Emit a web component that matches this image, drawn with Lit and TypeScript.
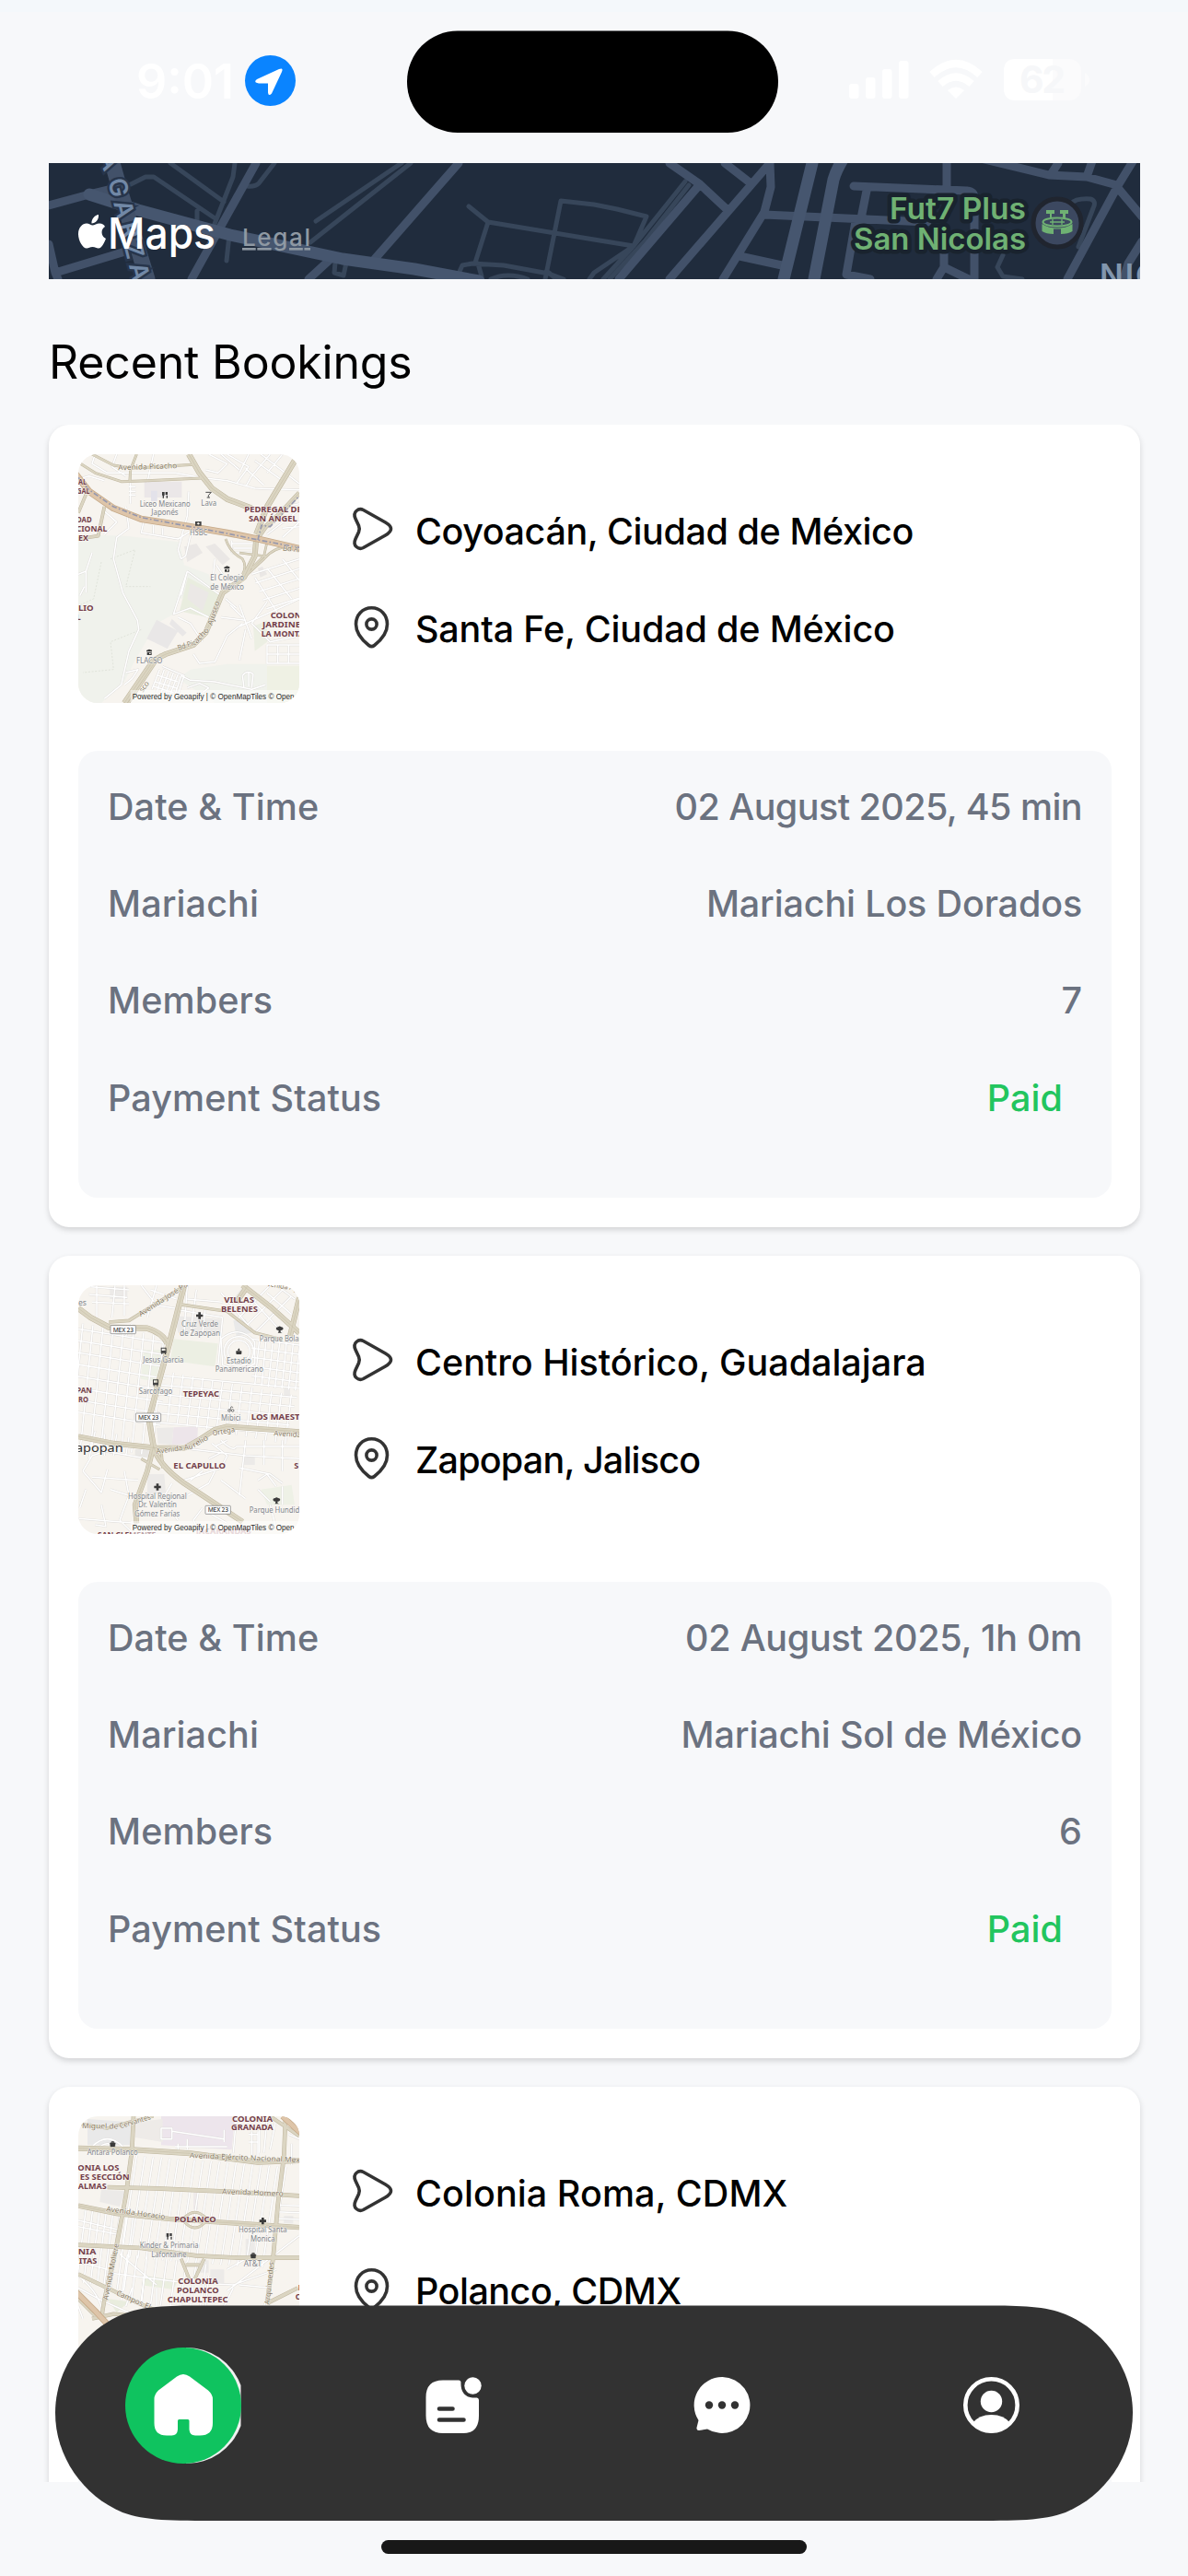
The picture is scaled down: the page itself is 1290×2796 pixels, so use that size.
import { LitElement, html, svg, css } from "lit";
import { customElement, property } from "lit/decorators.js";

/** A piece of card text with its tracking in pixels. */
type Tracked = [text: string, tracking: number];

interface Booking {
  from: Tracked;
  to: Tracked;
  rows: [string, Tracked][];
  map: number;
}

type Label = [kind: string, x: number, y: number, text: string, width: number, rotate?: number];

interface Tile {
  viewBox: string;
  areas: [string, string][];
  minor: string[];
  roads: [string, number][];
  trunks: [string, number][];
  rail: string;
  labels: Label[];
  marks: [string, number, number][];
}

/** Evenly spaced straight streets between two end lines. */
const grid = (n: number, a: number[], b: number[], step: number[]): string =>
  Array.from({ length: n }, (_, i) =>
    `M${a[0] + step[0] * i} ${a[1] + step[1] * i}L${b[0] + step[0] * i} ${b[1] + step[1] * i}`
  ).join("");

const TILES: Tile[] = [
  {
    viewBox: "75 129 720 810",
    areas: [
      ["#f0f2ec", "M75 395L135 392L230 395L405 415L420 490L500 520L525 590L400 600L385 650L330 680L260 800L225 870L150 939H75Z"],
      ["#f0f2ec", "M440 830L560 812H690V939H520L400 860Z"],
      ["#eff1e4", "M690 818H795V939H690Z"],
      ["#e9eddf", "M432 530L540 588L510 664L405 640Z"],
      ["#ecefe3", "M645 690L690 670L690 740L650 770Z"],
      ["#e9e7e7", "M330 668L400 705L365 762L298 730Z"],
      ["#e9e7e7", "M380 665L428 710L415 722L372 682Z"],
      ["#ebe8e6", "M440 550L500 580L480 640L430 600Z"],
      ["#ebe7e8", "M290 218H412V270H290Z"],
      ["#e3e2ea", "M312 248H332V282H312Z"],
      ["#eae7e5", "M490 430L520 420L570 470L545 490Z"],
      ["#eae7e5", "M420 430L460 420L480 450L430 480Z"],
      ["#eae7e5", "M660 500L675 495L690 520L668 530Z"],
    ],
    minor: [
      "M130 129L120 160L170 190L390 190L470 205L560 215L650 240L795 245",
      "M200 129L185 170L230 200M320 129L300 220M245 190V290M240 235H262M240 250H262M240 262H262M75 210L110 200L160 215",
      "M500 129L560 160L530 190L490 180M560 129L630 170L590 225M630 129L600 190M650 150L740 215M700 129L640 200L620 235M740 129L690 190M540 129L600 180M670 129L795 225M620 175L680 230",
      "M230 300L240 370L200 400L190 470L220 580L268 670L272 700L240 770L215 880L160 925",
      "M155 310L200 350L160 390M290 340L280 385L400 405L440 380M350 370V392M320 360V388M440 395L425 460L410 470L400 440L430 330L435 250",
      "M120 450L100 510L75 520M100 510V580M95 560L80 590",
      "M430 510L385 650L440 630L500 660M430 510L540 590M430 510L410 590M520 470L515 520M525 490L545 520",
      "M350 820L420 850L400 912M340 830L315 895M355 830L330 905M370 835L345 905M385 840L360 910M400 845L375 910M410 850L390 912M335 850L400 870M325 870L395 890M320 885L385 905",
      "M410 850L440 865L520 870L640 895L685 880M610 850L615 890M630 840V885M645 845L640 890M610 850Q625 830 645 845",
      "M430 890L470 875L500 890L480 905M230 840L270 830L250 860L225 880M540 660L620 670M555 600L590 630M450 780L470 810L520 805L560 720L610 680M400 660L440 680L480 740",
      grid(5, [640, 520], [795, 470], [12, 28]),
      "M650 530L740 670M690 500L770 600M740 470L795 540M600 690L795 600M600 620L640 730M620 700L600 800M690 610L640 680L700 740L795 720M570 620L610 660",
      "M690 750H795M690 780H795M690 810H795M690 750V812M725 750V812M760 750V812M575 420H650M580 435H640M575 450H640M575 410V450",
      "M700 310L795 290M720 330L795 350M740 370L795 365M690 390L795 310M740 400L795 350",
    ],
    roads: [
      ["M75 155L130 190L215 218L300 215L475 207", 7],
      ["M120 129L190 165L250 175L450 163", 7],
      ["M265 129L245 180L243 215", 7],
      ["M435 129L470 190L510 240L560 275L640 305", 17],
      ["M780 150L735 225L690 300L655 390", 17],
      ["M795 255L735 320L685 365L660 400", 14],
      ["M160 300L140 395L75 405M100 260L75 320", 9],
      ["M655 400L650 460L615 530L545 580L520 640L490 710L450 750L360 780L320 800L225 939", 16],
      ["M555 405Q570 450 610 470Q625 495 610 520M690 415L680 460L640 500M790 435Q720 420 680 470L615 530M600 450L690 462", 6],
      ["M345 780L240 939", 6],
    ],
    trunks: [["M60 185L110 250L190 305L280 340L440 365L560 385L660 405L810 440", 17]],
    rail: "M75 205L110 245L190 300L280 335L440 365L560 387L660 408L795 433M660 408L672 360L700 365L795 265",
    labels: [
      ["street", 205, 181, "Avenida Picacho", 192, -2],
      ["poi", 275, 299, "Liceo Mexicano", 165],
      ["poi", 313, 328, "Japonés", 88],
      ["poi", 475, 298, "Lava", 50],
      ["poi", 438, 393, "HSBC", 58],
      ["poi", 505, 541, "El Colegio", 110],
      ["poi", 505, 569, "de México", 110],
      ["poi", 264, 810, "FLACSO", 85],
      ["area", 75, 228, "AL", 27],
      ["area", 70, 257, "GAL", 43],
      ["area", 69, 350, "DAD", 50],
      ["area", 68, 380, "CIONAL", 101],
      ["area", 75, 410, "EX", 33],
      ["area", 75, 638, "LIO", 50],
      ["area", 68, 668, "L", 15],
      ["area", 616, 317, "PEDREGAL DE", 187],
      ["area", 630, 347, "SAN ÁNGEL", 158],
      ["area", 701, 662, "COLONIA", 132],
      ["area", 675, 693, "JARDINES", 140],
      ["area", 671, 723, "LA MONTAÑA", 180],
      ["street", 740, 443, "Bd Adolfo", 110, 5],
      ["street", 401, 768, "Bd Pic", 62, -18],
      ["street", 461, 746, "acho", 60, -46],
      ["street", 511, 688, "Ajusco", 82, -72],
      ["street", 285, 906, "sco", 38, -55],
    ],
    marks: [["fork", 357, 262], ["glass", 499, 261], ["bank", 466, 355], ["shop", 559, 503], ["shop", 306, 774]],
  },
  {
    viewBox: "75 135 720 810",
    areas: [
      ["#ecefe3", "M385 310L530 325L520 400L375 380Z"],
      ["#eef1e6", "M288 345L345 345L330 450L278 440Z"],
      ["#eef1e6", "M670 800L770 785L780 850L690 850Z"],
      ["#ede5ea", "M385 598L465 595L462 650L380 655Z"],
      ["#eceae8", "M330 600L385 598L380 655L335 650Z"],
      ["#eceae8", "M178 140H235V180H178Z"],
      ["#eceae8", "M390 235L540 245V290H400Z"],
      ["#e9e9e9", "M580 250L620 245L640 290L590 300Z"],
      ["#eceae8", "M300 750L355 750L360 810L300 820Z"],
      ["#eceae8", "M745 470H765V500H745Z"],
      ["#eceae8", "M615 690H650V720H615Z"],
      ["#e9e7e4", "M260 670H305V695H260Z"],
    ],
    minor: [
      grid(8, [60, 275], [370, 325], [-4, 38]),
      grid(9, [90, 260], [50, 650], [33, 5]),
      grid(6, [350, 430], [795, 470], [-8, 30]),
      grid(13, [385, 420], [365, 580], [32, 6]),
      grid(5, [640, 310], [795, 330], [0, 30]),
      grid(7, [665, 310], [650, 460], [22, 3]),
      "M135 135V240M115 140L240 150M110 165L235 175M120 190L240 195M195 135L185 240M225 135V235M280 135L330 200L390 210M310 150L395 180M330 135L300 240M250 260L230 300",
      "M430 135L420 290M460 150L440 290M430 180L545 190M400 215L545 240M490 205L480 290M545 240L530 400M540 160L640 280M590 250L700 135M620 270L740 150M650 290L770 170M640 180L740 290M690 160L770 230M720 135L780 180M620 135L570 200",
      "M370 660L620 690L795 700M620 640L600 820M680 640V720M740 640V740M590 660H795M480 740L440 770M420 770L540 730L560 690L510 650M540 640Q580 680 590 660M520 660L560 640M500 700L540 680",
      "M90 740L120 690L180 670M100 800L80 860M170 735L150 810L90 740M225 740L240 820L180 800M240 820L210 900L250 940M150 850L165 920L130 915M75 895L260 910M120 760L270 770M380 780L350 830L400 900M480 860L450 900L470 940M490 870L560 910M600 730L700 750L740 780M660 770L690 750L720 790M660 800L700 840M740 790V850M540 770L620 830M430 820L500 780L520 740M700 850L720 930",
      "M130 610L110 700M200 620L190 690M75 660L300 700M160 620V690M240 630L230 690",
      "M550 350a48 48 0 1 1 96 0a48 48 0 1 1 -96 0M562 350a36 36 0 1 1 72 0a36 36 0 1 1 -72 0M540 310Q600 260 650 320L650 390Q600 420 545 395Z",
    ],
    roads: [
      ["M75 210L115 240L175 272L300 275Q350 290 365 325", 17],
      ["M420 135L370 330L340 440L305 570L320 660", 17],
      ["M425 135L240 250L175 255", 9],
      ["M410 198L560 220L650 290L740 312", 8],
      ["M610 135L700 205L795 290M795 175L765 300M625 140L590 190", 16],
      ["M75 628L190 650L330 665L420 665Q470 640 520 605L560 595L795 612", 15],
      ["M320 660L300 740L260 850L265 910", 15],
      ["M320 660Q335 720 420 780L610 905", 16],
      ["M345 665L350 730M280 700L340 735", 7],
    ],
    trunks: [],
    rail: "",
    labels: [
      ["street", 278, 238, "Avenida José Pa", 185, -33],
      ["poi", 75, 202, "es", 27],
      ["area", 550, 191, "VILLAS", 98],
      ["area", 540, 221, "BELENES", 120],
      ["street", 690, 138, "venida Ag", 100, 9],
      ["poi", 411, 271, "Cruz Verde", 120],
      ["poi", 406, 300, "de Zapopan", 131],
      ["poi", 665, 319, "Parque Bolar", 138],
      ["poi", 286, 388, "Jesus Garcia", 132],
      ["poi", 558, 389, "Estadio", 80],
      ["poi", 521, 418, "Panamericano", 157],
      ["poi", 272, 490, "Sarcofago", 110],
      ["area", 416, 498, "TEPEYAC", 118],
      ["area", 69, 486, "PAN", 51],
      ["area", 75, 516, "RO", 33],
      ["poi", 540, 575, "Mibici", 64],
      ["area", 638, 572, "LOS MAESTR", 178],
      ["street", 712, 625, "Avenida", 88, 3],
      ["street", 330, 684, "Avenida Au", 120, -8],
      ["street", 452, 664, "relio", 56, -30],
      ["street", 513, 625, "Ortega", 74, -10],
      ["city", 66, 679, "apopan", 155],
      ["area", 385, 732, "EL CAPULLO", 170],
      ["area", 778, 732, "S", 15],
      ["poi", 237, 831, "Hospital Regional", 191],
      ["poi", 270, 859, "Dr. Valentín", 126],
      ["poi", 258, 889, "Gómez Farías", 148],
      ["poi", 632, 875, "Parque Hundid", 164],
      ["area", 138, 958, "SAN CLEMENTE", 190],
      ["faint", 458, 945, "JACARANDAS", 180],
    ],
    marks: [["cross", 470, 234], ["tree", 731, 279], ["bus", 353, 348], ["bus", 327, 452], ["cup", 598, 350], ["bike", 572, 538], ["cross", 333, 792], ["tree", 721, 836], ["mex", 221, 279], ["mex", 303, 565], ["mex", 530, 866]],
  },
  {
    viewBox: "75 141 720 810",
    areas: [
      ["#ede5ec", "M345 141H585L575 250L345 235Z"],
      ["#e9e9e9", "M105 150L245 160V235H105Z"],
      ["#eeebe8", "M260 160L350 150V225L260 210Z"],
      ["#eceae8", "M150 380L230 385L210 435L145 420Z"],
      ["#eceae8", "M620 540L650 540V600H620Z"],
      ["#ebefe0", "M290 660L400 675L385 705L290 692Z"],
      ["#eceae8", "M505 640H550V690H505Z"],
      ["#e9edde", "M170 735L240 745L200 780Z"],
      ["#eceae8", "M745 465H775V490H745Z"],
      ["#eceae8", "M470 610H500V650H460Z"],
      ["#efeaea", "M450 390H465V445H450Z"],
    ],
    minor: [
      grid(19, [265, 270], [215, 600], [27, 2]),
      grid(9, [235, 590], [215, 740], [32, 4]),
      grid(8, [100, 440], [70, 680], [22, 4]),
      grid(3, [720, 430], [795, 433], [0, 22]),
      "M75 480L205 510M75 500L200 525M75 615L170 640M210 590L330 690M170 650L400 680L580 690L720 640M560 710L795 530M630 600L560 640M75 700L150 740L240 780M75 660Q150 720 160 800M90 800L75 760",
      "M345 180H380V215H345ZM380 190L550 215M400 230V260M430 215V250M390 240H560M550 185V225M640 190V270M660 190V270M630 225H660M590 141L580 260M630 200H660",
      "M120 240Q170 190 220 240M135 250Q170 210 205 250M665 170V260M690 150L680 260M720 145L700 250M760 200L795 215M770 230V300",
      "M250 700L230 760M290 655L280 760M580 700L550 760M600 690L700 700L680 760M330 700V760M500 660L490 760",
    ],
    roads: [
      ["M75 165L170 180L240 160L320 141", 8],
      ["M75 245L250 250L440 262L660 290L795 285", 16],
      ["M255 141L250 250L230 400L200 560L160 740", 12],
      ["M750 150L745 270L725 430L710 600L690 750", 12],
      ["M170 372L330 376L600 388L795 400", 12],
      ["M75 432L200 458L370 475L520 485L795 503", 14],
      ["M75 560L280 570L460 595L600 602L795 602", 12],
      ["M415 478Q455 430 495 478Q455 530 415 478", 7],
      ["M410 605L440 680M485 605L455 670M425 625H470", 9],
      ["M75 655L190 710L260 745L330 775M60 720L130 790M690 750L790 700M120 800L190 785L250 790M160 740L150 800", 11],
      ["M700 141L795 205", 10],
    ],
    trunks: [["M740 141L810 205", 14], ["M60 705L130 775L190 840", 15]],
    rail: "",
    labels: [
      ["street", 87, 180, "Miguel de", 118, 1],
      ["street", 212, 181, "Cervantes", 105, -17],
      ["poi", 104, 268, "Antara Polanco", 165],
      ["area", 576, 158, "COLONIA", 132],
      ["area", 573, 187, "GRANADA", 137],
      ["street", 437, 276, "Avenida Ejército Nacional Mexicano", 425, 2.5],
      ["area", 73, 317, "ONIA LOS", 135],
      ["area", 80, 347, "ES SECCIÓN", 162],
      ["area", 74, 377, "ALMAS", 93],
      ["street", 543, 394, "Avenida Homero", 200, 2],
      ["street", 165, 450, "Avenida Horacio", 194, 8],
      ["area", 388, 486, "POLANCO", 136],
      ["poi", 597, 520, "Hospital Santa", 158],
      ["poi", 636, 549, "Monica", 80],
      ["poi", 275, 570, "Kinder & Primaria", 192],
      ["poi", 313, 599, "Lafontaine", 115],
      ["poi", 614, 630, "AT&T", 58],
      ["area", 74, 592, "NIA", 59],
      ["area", 77, 622, "ITAS", 59],
      ["area", 400, 686, "COLONIA", 130],
      ["area", 396, 716, "POLANCO", 137],
      ["area", 365, 746, "CHAPULTEPEC", 198],
      ["street", 172, 740, "Avenida Moliere", 186, -79],
      ["street", 197, 722, "Campos El", 120, 24],
      ["street", 698, 755, "Arquimedes", 140, -84],
      ["area", 791, 708, "L", 14],
      ["area", 782, 738, "CO", 36],
    ],
    marks: [["basket", 187, 231], ["cross", 676, 482], ["fork", 371, 532], ["basket", 645, 594]],
  },
];

const mark = (kind: string) => {
  switch (kind) {
    case "cross": return svg`<path d="M-4 -11H4V-4H11V4H4V11H-4V4H-11V-4H-4Z" fill="#3b3b3b"/>`;
    case "tree": return svg`<path d="M-12 -2Q-12 -8 -5 -8Q0 -13 5 -8Q12 -8 12 -2Q9 4 3 3V8Q6 11 10 11H-6Q-3 9 -3 3Q-10 4 -12 -2Z" fill="#3b3b3b"/>`;
    case "bus": return svg`<path d="M-9 -10H9V8H-9ZM-6 -7V0H6V-7ZM-7 8H-4V12H-7ZM4 8H7V12H4Z" fill="#444" fill-rule="evenodd"/>`;
    case "cup": return svg`<path d="M-9 -1H9V7Q9 10 6 10H-6Q-9 10 -9 7ZM-3 -2V-6L0 -10L3 -6V-2Z" fill="#3b3b3b"/>`;
    case "bike": return svg`<path d="M-9 5a4 4 0 1 0 8 0a4 4 0 1 0 -8 0M2 5a4 4 0 1 0 8 0a4 4 0 1 0 -8 0M-3 4L0 -2L-2 -4L4 -8L7 -4" fill="none" stroke="#666" stroke-width="2.5"/>`;
    case "fork": return svg`<path d="M-9 -10H-1V1H-3V10H-7V1H-9ZM2 -10H9V-1H2ZM5 1H9V10H5Z" fill="#3b3b3b"/>`;
    case "glass": return svg`<path d="M-9 -8H9L0 2V8M-5 9H5" fill="none" stroke="#4a4a4a" stroke-width="3"/>`;
    case "bank": return svg`<path d="M-10 -7H10V7H-10ZM-5 0L0 4L5 0L0 -4Z" fill="#444" fill-rule="evenodd"/>`;
    case "shop": return svg`<path d="M-9 -6L0 -10L9 -7V-2H-9ZM-7 0H8V9H-7ZM0 2V6H5V2Z" fill="#3b3b3b" fill-rule="evenodd"/>`;
    case "basket": return svg`<path d="M-9 -3H9L7 9H-7ZM-6 -4Q-5 -8 0 -8Q5 -8 6 -4" fill="#3b3b3b" stroke="#3b3b3b"/>`;
    default: return svg`<rect x="-41" y="-13" width="82" height="27" rx="2" fill="#fff" stroke="#777" stroke-width="2"/><text class="shield" x="-33" y="8" textLength="67">MEX 23</text>`;
  }
};

@customElement("map-tile")
class MapTile extends LitElement {
  @property({ type: Number }) index = 0;

  static styles = css`
    :host { display: block; width: 240px; height: 270px; border-radius: 21px; overflow: hidden; flex: none; }
    svg { display: block; width: 240px; height: 270px; }
    path { stroke-linejoin: round; }
    .casing { fill: none; stroke: #dcdad8; stroke-width: 7; }
    .lane { fill: none; stroke: #fff; stroke-width: 4.5; }
    text { font-family: "Noto Sans", sans-serif; paint-order: stroke; stroke: #faf8f4; stroke-width: 2.5px; stroke-linejoin: round; }
    .poi { font-size: 24px; fill: #7f848b; }
    .street { font-size: 24px; fill: #85775f; }
    .area { font-size: 24.5px; font-weight: 700; fill: #743f4a; }
    .faint { font-size: 24px; font-weight: 700; fill: #cfb0b4; }
    .city { font-size: 37px; fill: #333; }
    .shield { font-size: 20px; fill: #444; stroke: none; font-weight: 500; }
    .credit { font-family: "Liberation Sans", Arial, sans-serif; font-size: 24.5px; fill: #2a2a2a; stroke: none; }
  `;

  render() {
    const t = TILES[this.index];
    const [x, y] = t.viewBox.split(" ").map(Number);
    return html`<svg viewBox=${t.viewBox}>
      <rect x=${x} y=${y} width="720" height="810" fill="#f7f4ef"></rect>
      ${t.areas.map(([c, d]) => svg`<path d=${d} fill=${c}/>`)}
      ${this.index === 0 ? svg`<path d="M180 470L260 440L230 560L310 560M150 480L125 600L80 620M280 700L180 740L190 830L90 840" fill="none" stroke="#dce0d6" stroke-width="2.5" stroke-dasharray="6 5"/>` : ""}
      ${t.minor.map((d) => svg`<path class="casing" d=${d}/>`)}
      ${t.minor.map((d) => svg`<path class="lane" d=${d}/>`)}
      ${t.roads.map(([d, w]) => svg`<path d=${d} fill="none" stroke="#beb59d" stroke-width=${w + 2}/>`)}
      ${t.roads.map(([d, w]) => svg`<path d=${d} fill="none" stroke="#dbd5c2" stroke-width=${w - 1}/>`)}
      ${t.roads.filter((r) => r[1] > 12).map(([d]) => svg`<path d=${d} fill="none" stroke="#c3bba3" stroke-width="1.5"/>`)}
      ${t.trunks.map(([d, w]) => svg`<path d=${d} fill="none" stroke="#c6aa89" stroke-width=${w + 5}/><path d=${d} fill="none" stroke="#dec5a9" stroke-width=${w}/>`)}
      <path d=${t.rail} fill="none" stroke="#9698ad" stroke-width="5" stroke-dasharray="17 7 5 7"></path>
      ${t.labels.map(([k, lx, ly, s, w, r]) => svg`<text class=${k} x=${lx} y=${ly} textLength=${w} lengthAdjust="spacingAndGlyphs" transform="rotate(${r ?? 0} ${lx} ${ly})">${s}</text>`)}
      ${t.marks.map(([k, mx, my]) => svg`<g transform="translate(${mx} ${my})">${mark(k)}</g>`)}
      <rect x=${x + 170} y=${y + 768} width="550" height="42" fill="#fff" opacity="0.5"></rect>
      <text class="credit" x=${x + 176} y=${y + 797} textLength="528" lengthAdjust="spacingAndGlyphs">Powered by Geoapify | © OpenMapTiles © Open</text>
    </svg>`;
  }
}

const tracked = ([text, spacing]: Tracked) => html`<span style="letter-spacing: ${spacing}px">${text}</span>`;

@customElement("booking-card")
class BookingCard extends LitElement {
  @property({ attribute: false }) booking!: Booking;

  static styles = css`
    :host {
      display: flex; flex-direction: column; gap: 52px; flex: none;
      box-sizing: border-box; height: 871px; padding: 32px 31px 32px 32px;
      background: #fff; border-radius: 22px; box-shadow: 0 3px 6px rgba(0, 0, 0, 0.15);
    }
    .trip { display: flex; gap: 56px; }
    .stops { display: flex; flex-direction: column; padding-top: 31px; }
    .stop { display: flex; align-items: center; gap: 24px; height: 106px; font-size: 39.5px; font-weight: 500; color: #000; white-space: nowrap; }
    .stop svg { flex: none; width: 46px; height: 50px; margin-bottom: 6px; }
    .panel { display: flex; flex-direction: column; box-sizing: border-box; height: 485px; padding: 8px 32px 0 32px; border-radius: 21px; background: #f7f8fa; color: #6b7280; }
    .row { display: flex; align-items: center; justify-content: space-between; height: 105.3px; font-size: 39.5px; font-weight: 500; letter-spacing: 0.1px; white-space: nowrap; }
    .paid { color: #22c55e; padding-right: 21px; }
  `;

  render() {
    const b = this.booking;
    return html`
      <div class="trip">
        <map-tile .index=${b.map}></map-tile>
        <div class="stops">
          <div class="stop">
            <svg viewBox="0 0 46 50" fill="none" stroke="#333" stroke-width="3.6"><path d="M13.5 4.5L37.5 18Q43.500 21.500 43.500 25Q43.500 28.500 37.500 32L13.500 45.500Q9.500 47.500 6 44.500Q2.500 41.500 5 36L8.500 28.500Q10 25 8.500 21.500L5 14Q2.500 8.500 6 5.500Q9.500 2.500 13.500 4.500Z"/></svg>
            ${tracked(b.from)}
          </div>
          <div class="stop">
            <svg viewBox="0 0 46 50" fill="none" stroke="#333" stroke-width="3.6"><path d="M22.500 4.800C12.500 4.800 5.500 12.500 5.500 22.500C5.500 32 12.500 40 19.500 45.500Q22.500 47.800 25.500 45.500C32.500 40 39.500 32 39.500 22.500C39.500 12.500 32.500 4.800 22.500 4.800Z"/><circle cx="22.500" cy="22.500" r="5.600"/></svg>
            ${tracked(b.to)}
          </div>
        </div>
      </div>
      <div class="panel">
        ${b.rows.map(([k, v]) => html`<div class="row"><span>${k}</span>${tracked(v)}</div>`)}
        <div class="row"><span>Payment Status</span><span class="paid">Paid</span></div>
      </div>`;
  }
}

const BOOKINGS: Booking[] = [
  {
    from: ["Coyoacán, Ciudad de México", -0.42],
    to: ["Santa Fe, Ciudad de México", -0.17],
    map: 0,
    rows: [["Date & Time", ["02 August 2025, 45 min", -0.57]], ["Mariachi", ["Mariachi Los Dorados", -0.15]], ["Members", ["7", 0]]],
  },
  {
    from: ["Centro Histórico, Guadalajara", -0.02],
    to: ["Zapopan, Jalisco", -0.8],
    map: 1,
    rows: [["Date & Time", ["02 August 2025, 1h 0m", -0.27]], ["Mariachi", ["Mariachi Sol de México", -0.15]], ["Members", ["6", 0]]],
  },
  { from: ["Colonia Roma, CDMX", 0.07], to: ["Polanco, CDMX", -0.5], map: 2, rows: [] },
];

const CITY_ROADS: [string, number, string][] = [
  ["#37465a", 5, "M255 177L253 192L233 243M185 177L243 219M142 200L158 192H167L232 236M214 229V243M298 177L281 199Q277 203 268 202M249 255L246 283M436 177L343 240M446 177L337 263M364 285L363 296L373 299L376 285M509 224L530 241L645 260L688 267M530 241L516 285M645 222L609 218L592 303M498 297L502 288L513 286L547 288L596 297L612 303M519 286L523 300M533 303Q551 295 573 303M640 303L645 296L688 267M645 222L670 227L702 235L692 258L688 267M744 197L688 267L655 303M748 201L700 262L662 303M1163 221Q1168 215 1184 216Q1191 218 1187 226L1171 268M1089 277L1083 290L1089 300L1110 303M596 296L604 303"],
  ["#425169", 9, "M278 177L208 303M53 223L97 211L118 206M53 265L60 296L136 273M60 296L63 303M498 177L407 281M358 282L335 303M836 177L727 303M760 200L672 303M727 177L760 200L789 227M787 177L814 198M836 177L837 203L830 230L785 303M803 278L849 288M830 233L1007 241M927 202L1050 207Q1058 208 1058 215V303M941 207L935 237M1028 177V203M929 240L919 298L945 303M1025 265V290L1017 303M1025 290L1052 303M1065 172L1139 190L1180 192L1213 201M1149 177L1142 188M1187 172L1180 192M1232 172L1213 203L1159 303M1213 203L1240 235M1240 262L1225 286L1220 303"],
  ["#46566f", 13, "M882 177L851 303M917 170Q908 184 905 195L884 303M97 211L150 228L250 255L372 281L450 292L520 305"],
  ["#425169", 17, "M120 170L132 212L160 303"],
];

@customElement("app-root")
class AppRoot extends LitElement {
  static styles = css`
    :host { display: flex; flex-direction: column; position: relative; width: 1290px; height: 2796px; overflow: hidden; background: #f7f8fa; font-family: Inter, "Liberation Sans", sans-serif; }
    .status { flex: none; height: 177px; background: linear-gradient(#f4f8fb 0 13px, transparent 13px); }
    .status svg, .city svg { display: block; }
    .time { font-size: 52px; font-weight: 600; fill: #fff; }
    .charge { font-size: 41px; font-weight: 700; fill: #f6f7f9; }
    .city { flex: none; height: 126px; margin-left: 53px; width: 1185px; }
    .brand { font-size: 47px; font-weight: 450; fill: #fff; }
    .legal { font-size: 26px; font-weight: 500; fill: #8f99a3; text-decoration: underline; }
    .venue { font-size: 32px; font-weight: 600; fill: #6fb173; paint-order: stroke; stroke: #19232e; stroke-width: 9px; stroke-linejoin: round; }
    .avenue { font-size: 27px; font-weight: 600; fill: #7188a6; paint-order: stroke; stroke: #27354b; stroke-width: 5px; }
    .district { font-size: 34px; font-weight: 600; fill: #8196ad; }
    h1 { flex: none; box-sizing: border-box; margin: 0; height: 158px; padding: 60px 0 0 53px; font-size: 50px; line-height: 60px; font-weight: 400; letter-spacing: -0.17px; color: #000; }
    .list { display: flex; flex-direction: column; gap: 31px; height: 2233px; padding: 0 52px 0 53px; overflow: hidden; }
    .dock { position: absolute; left: 60px; top: 2502px; width: 1170px; height: 234px; }
    .homebar { position: absolute; left: 414px; top: 2757px; width: 462px; height: 15px; border-radius: 8px; background: #181818; }
  `;

  render() {
    return html`
      <div class="status">
        <svg width="1290" height="177" viewBox="0 0 1290 177">
          <text class="time" x="148" y="107" textLength="106">9:01</text>
          <circle cx="293.500" cy="87.500" r="27.500" fill="#0a84ff"/>
          <path d="M279 86L303 75Q308 73 306 78L295 101.500Q291.500 105 291 100.500V90.500H281Q274.500 89.500 279 86Z" fill="#fff"/>
          <rect x="442" y="33.500" width="403" height="110.500" rx="55" fill="#000"/>
          <g fill="#fff">
            <rect x="922" y="91" width="10.500" height="16" rx="3"/><rect x="940" y="84" width="10.500" height="23" rx="3"/>
            <rect x="958" y="75" width="10.500" height="32" rx="3"/><rect x="976" y="66" width="10.500" height="41" rx="3"/>
            <path d="M1038 107L1029 98Q1038 91 1047 98Z"/>
          </g>
          <path d="M1012 81Q1038 57 1064 81M1021 91Q1038 76 1055 91" fill="none" stroke="#fff" stroke-width="8"/>
          <rect x="1090" y="64" width="84" height="45" rx="13" fill="#fbfbfc"/>
          <path d="M1143 64H1103Q1090 64 1090 77V96Q1090 109 1103 109H1143Z" fill="#fff"/>
          <path d="M1178 79Q1183 82 1183 87Q1183 91 1178 94Z" fill="#fbfbfc"/>
          <text class="charge" x="1107" y="101" textLength="50">62</text>
        </svg>
      </div>
      <div class="city">
        <svg width="1185" height="126" viewBox="53 177 1185 126">
          <rect x="53" y="177" width="1185" height="126" fill="#202c3d"/>
          ${CITY_ROADS.map(([c, w, d]) => svg`<path d=${d} fill="none" stroke=${c} stroke-width=${w} stroke-linejoin="round" stroke-linecap="round"/>`)}
          <text class="avenue" transform="translate(106 169) rotate(68)">A</text>
          <text class="avenue" transform="translate(117 196) rotate(76)" textLength="114">GARZA</text>
          <path d="M107 233c.5 5-3 9.500-7.500 9.500-.500-4.500 3.500-9 7.500-9.500zM100.500 244.500c2 0 4.500-2 7.500-2 3 0 5 1.500 6 3.500-5 3-4.500 10.500 1 13-1.500 4-4.500 10.500-8 10.500-2.500 0-3.500-1.500-6.500-1.500s-4 1.500-6.500 1.500c-4 0-9-8-9-15.500 0-7 4.500-11.500 9-11.500 2.500 0 5 2 6.500 2z" fill="#fff"/>
          <text class="brand" x="117" y="270" textLength="117" lengthAdjust="spacingAndGlyphs">Maps</text>
          <text class="legal" x="263" y="267" textLength="74">Legal</text>
          <text class="venue" x="966" y="238" textLength="148" lengthAdjust="spacingAndGlyphs">Fut7 Plus</text>
          <text class="venue" x="927" y="271" textLength="187" lengthAdjust="spacingAndGlyphs">San Nicolas</text>
          <circle cx="1148" cy="242" r="26" fill="#3c4860" stroke="#20252f" stroke-width="5"/>
          <path d="M1136 228H1145V232H1142V237H1140V232H1136ZM1151 228H1160V232H1157V237H1154V232H1151ZM1131.500 243V251Q1136 254 1144 254V248.500H1152V254Q1160 254 1164.500 251V243Q1158 247.500 1148 247.500Q1138 247.500 1131.500 243Z" fill="#6fb173"/>
          <ellipse cx="1148" cy="241" rx="15.500" ry="4.500" fill="none" stroke="#6fb173" stroke-width="2"/>
          <path d="M1140 241H1156M1143 238V244M1153 238V244" stroke="#6fb173" stroke-width="1.300"/>
          <text class="district" x="1194" y="311" textLength="64">NIC</text>
        </svg>
      </div>
      <h1>Recent Bookings</h1>
      <div class="list">${BOOKINGS.map((b) => html`<booking-card .booking=${b}></booking-card>`)}</div>
      <svg class="dock" viewBox="60 2502 1170 234">
        <path d="M220 2502.500H1070C1110 2502.500 1135 2503 1157 2512C1200 2530 1230 2572 1230 2619C1230 2666 1200 2709 1157 2727C1132 2736 1105 2736 1050 2736H240C185 2736 158 2736 133 2727C90 2709 60 2666 60 2619C60 2572 90 2530 133 2512C155 2503 180 2502.500 220 2502.500Z" fill="#323232"/>
        <path d="M202 2548A63 63 0 0 1 261.500 2589V2633A63 63 0 0 1 202 2674Z" fill="#f0f0f0"/>
        <circle cx="199" cy="2611" r="63" fill="#0fc35f"/>
        <path d="M192 2579.500Q199 2574.500 206 2579.500L226 2594.500Q231 2599 231 2604V2630Q231 2643.500 217 2643.500H212Q206 2643.500 205.500 2637V2627.500Q205.500 2626 204 2626H194.500Q193 2626 193 2627.500V2637Q192.500 2643.500 186.500 2643.500H181Q167.500 2643.500 167.500 2630V2604Q167.500 2599 172 2594.500Z" fill="#fff"/>
        <path d="M481 2583.500H498Q500.500 2583.500 500.500 2586C500 2596 505 2602 513 2602.500H518Q520 2603 520 2605V2622Q520 2641 503 2641H481Q462.500 2641 462.500 2622V2602Q462.500 2583.500 481 2583.500Z" fill="#fff"/>
        <circle cx="513.500" cy="2589.500" r="9.200" fill="#fff"/>
        <path d="M477 2614.500H491.500M477 2626.500H503.500" stroke="#323232" stroke-width="4.600" stroke-linecap="round"/>
        <path d="M784.500 2580A30.500 30.500 0 1 1 768 2636.500L759 2638Q756 2638 756.500 2635L758.500 2627A30.500 30.500 0 0 1 784.500 2580Z" fill="#fff"/>
        <circle cx="770" cy="2610.500" r="4.200" fill="#323232"/><circle cx="784" cy="2610.500" r="4.200" fill="#323232"/><circle cx="798" cy="2610.500" r="4.200" fill="#323232"/>
        <circle cx="1076.500" cy="2610.500" r="28.200" fill="none" stroke="#fff" stroke-width="4.600"/>
        <circle cx="1076.500" cy="2606.500" r="11.700" fill="#fff"/>
        <path d="M1056 2630Q1063 2621 1076.500 2621Q1090 2621 1097 2630Q1088 2640.500 1076.500 2640.500Q1064 2640.500 1056 2630Z" fill="#fff"/>
      </svg>
      <div class="homebar"></div>`;
  }
}
